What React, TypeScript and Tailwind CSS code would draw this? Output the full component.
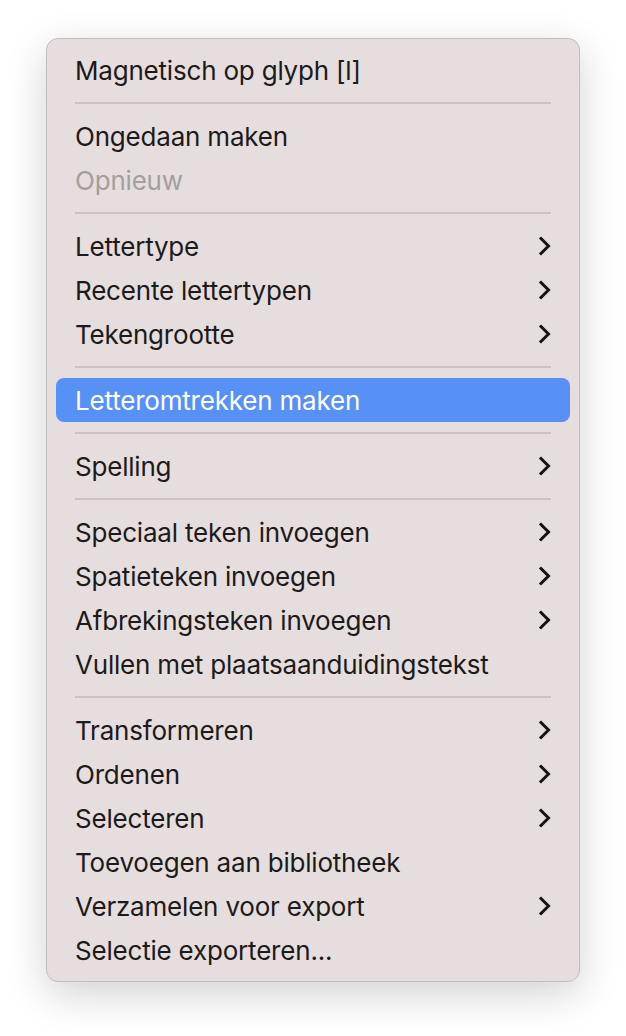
import React from 'react';

type Item =
  | { kind: 'sep' }
  | { kind: 'item'; label: string; sub?: boolean; disabled?: boolean; active?: boolean };

const items: Item[] = [
  { kind: 'item', label: 'Magnetisch op glyph [l]' },
  { kind: 'sep' },
  { kind: 'item', label: 'Ongedaan maken' },
  { kind: 'item', label: 'Opnieuw', disabled: true },
  { kind: 'sep' },
  { kind: 'item', label: 'Lettertype', sub: true },
  { kind: 'item', label: 'Recente lettertypen', sub: true },
  { kind: 'item', label: 'Tekengrootte', sub: true },
  { kind: 'sep' },
  { kind: 'item', label: 'Letteromtrekken maken', active: true },
  { kind: 'sep' },
  { kind: 'item', label: 'Spelling', sub: true },
  { kind: 'sep' },
  { kind: 'item', label: 'Speciaal teken invoegen', sub: true },
  { kind: 'item', label: 'Spatieteken invoegen', sub: true },
  { kind: 'item', label: 'Afbrekingsteken invoegen', sub: true },
  { kind: 'item', label: 'Vullen met plaatsaanduidingstekst' },
  { kind: 'sep' },
  { kind: 'item', label: 'Transformeren', sub: true },
  { kind: 'item', label: 'Ordenen', sub: true },
  { kind: 'item', label: 'Selecteren', sub: true },
  { kind: 'item', label: 'Toevoegen aan bibliotheek' },
  { kind: 'item', label: 'Verzamelen voor export', sub: true },
  { kind: 'item', label: 'Selectie exporteren...' },
];

function Chevron({ color }: { color: string }) {
  return (
    <svg width="14" height="20" viewBox="0 0 14 20" fill="none">
      <path d="M3 2.5 L10.5 10 L3 17.5" stroke={color} strokeWidth="3" strokeLinecap="square" strokeLinejoin="miter" />
    </svg>
  );
}

export default function App() {
  return (
    <div className="min-h-screen w-full bg-white pt-[38px] pl-[46px]" style={{ fontFamily: 'Inter, "Noto Sans", sans-serif' }}>
      <div className="w-[534px] rounded-[12px] border border-[#c2bdbd] bg-[#e6dede] px-[9px] py-[9px] shadow-[0_12px_40px_rgba(0,0,0,0.18)]">
        {items.map((it, i) =>
          it.kind === 'sep' ? (
            <div key={i} className="px-[19px] py-[10px]">
              <div className="h-[2px] bg-[#cbc3c3]" />
            </div>
          ) : (
            <div
              key={i}
              className={
                'flex h-[44px] items-center justify-between rounded-[8px] pl-[19px] pr-[18px] text-[26px] tracking-[-0.2px] ' +
                (it.active ? 'bg-[#5891f5] text-white' : it.disabled ? 'text-[#a49e9e]' : 'text-[#1c1a1a]')
              }
            >
              <span>{it.label}</span>
              {it.sub && <Chevron color={it.active ? '#ffffff' : '#141212'} />}
            </div>
          )
        )}
      </div>
    </div>
  );
}
